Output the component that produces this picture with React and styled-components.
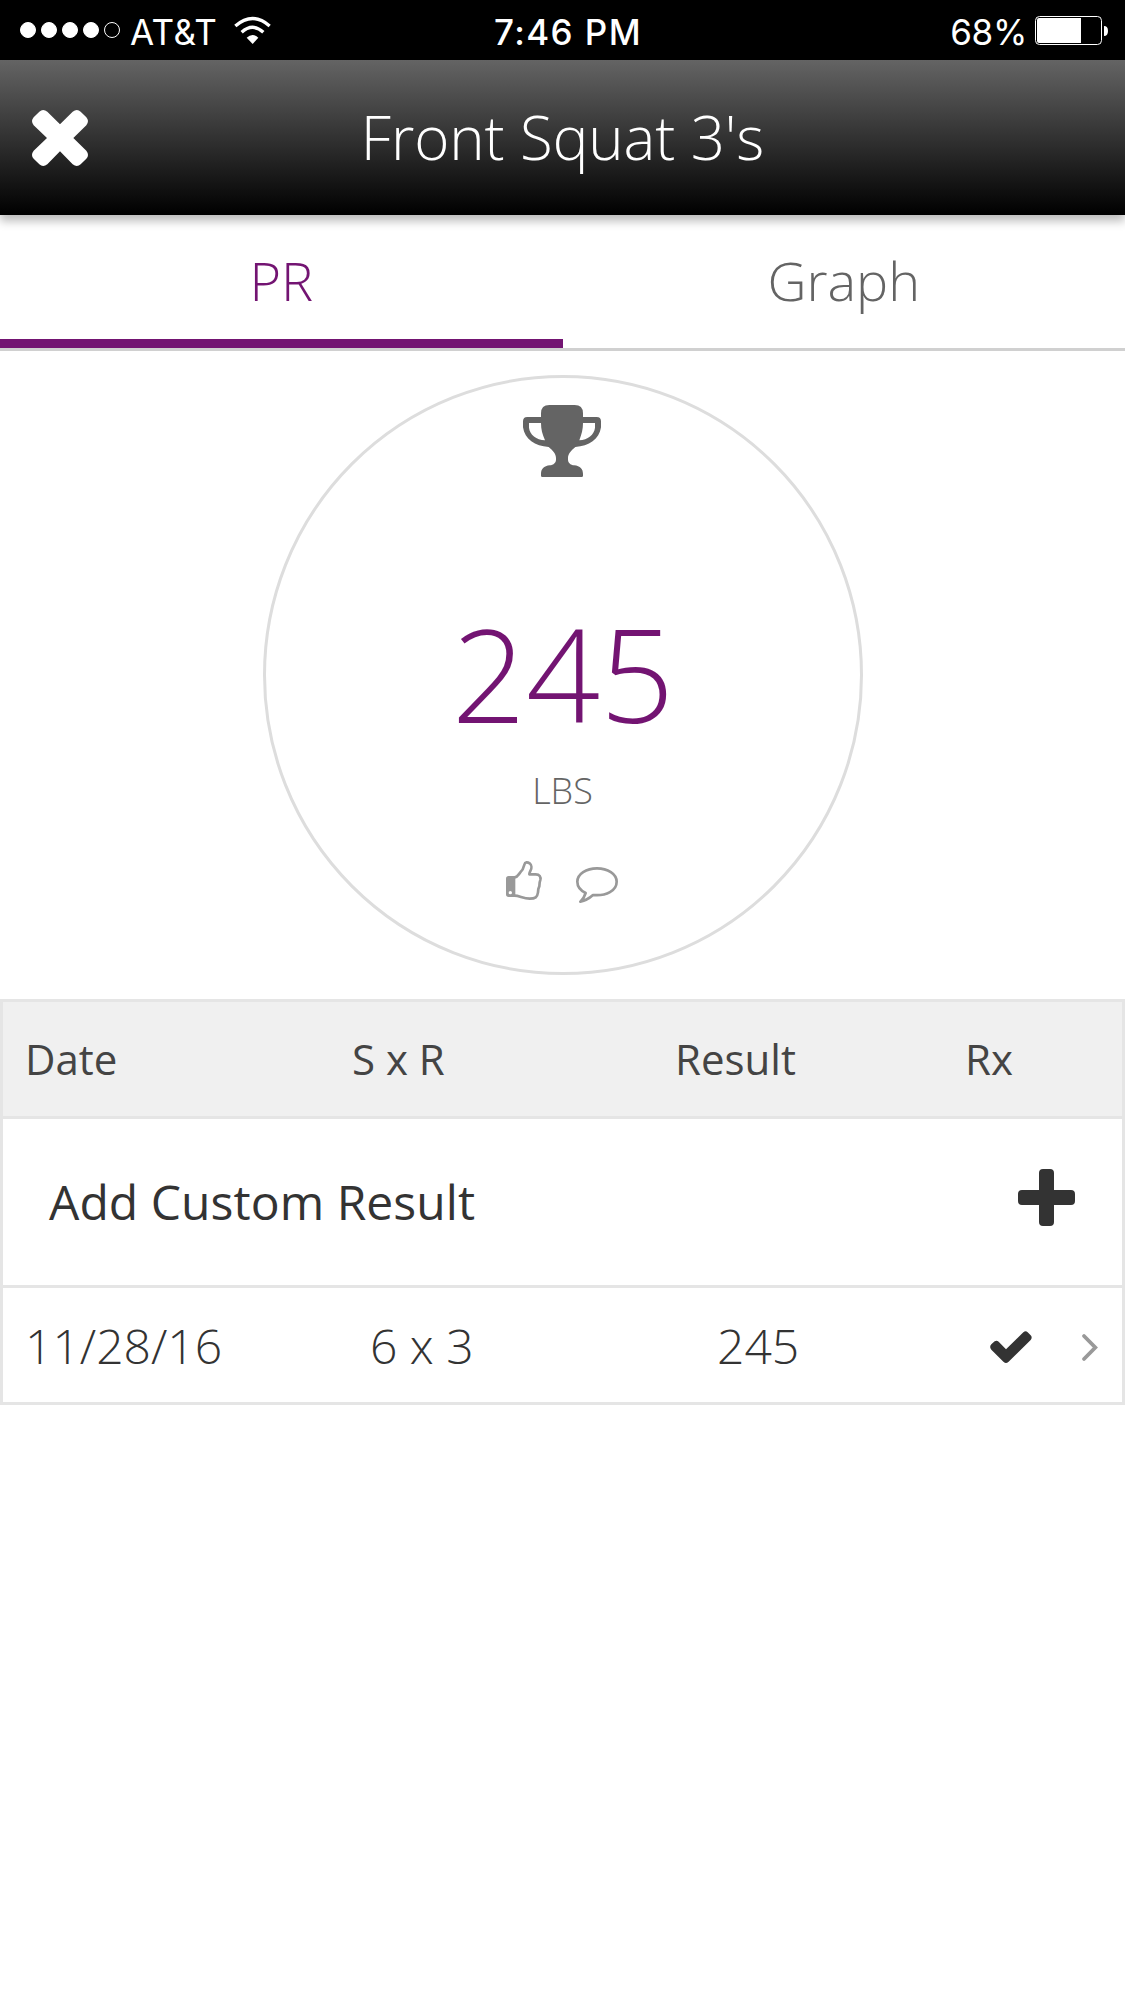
import React from "react";
import styled, { createGlobalStyle } from "styled-components";

const Global = createGlobalStyle`
  * { box-sizing: border-box; }
  body { margin: 0; background: #fff; }
`;

const Screen = styled.main`
  width: 1125px;
  height: 2001px;
  overflow: hidden;
  background: #fff;
  color: #333;
  font-family: "Open Sans", sans-serif;
`;

const StatusBar = styled.div`
  display: grid;
  grid-template-columns: 1fr auto 1fr;
  align-items: center;
  height: 60px;
  padding: 0 17px 0 20px;
  background: #000;
  color: #fff;
  font-family: Inter, sans-serif;
  font-size: 35px;
  line-height: 56px;
`;
const StatusGroup = styled.div`
  display: flex;
  align-items: center;
  justify-content: ${(p) => (p.$end ? "flex-end" : "flex-start")};
`;
const Clock = styled.span`
  padding: 3px 0 0 8px;
  font-weight: 500;
  letter-spacing: 1.4px;
`;
const Carrier = styled.span`
  margin: 0 17px 0 10px;
  padding-top: 3px;
  letter-spacing: 0.4px;
`;
const Charge = styled.span`
  margin-right: 8px;
  padding-top: 3px;
  letter-spacing: -0.3px;
`;
const Dots = styled.div`
  display: flex;
  gap: 5px;
`;
const Dot = styled.i`
  width: 16px;
  height: 16px;
  border: 1px solid #fff;
  border-radius: 50%;
  background: ${(p) => (p.$on ? "#fff" : "transparent")};
`;
const Icon = styled.svg`
  display: block;
  flex: none;
  overflow: visible;
`;

const Header = styled.header`
  position: relative;
  display: grid;
  grid-template-columns: 120px 1fr 120px;
  align-items: center;
  height: 155px;
  padding-left: 32px;
  padding-right: 32px;
  background: linear-gradient(#646464, #000);
  box-shadow: 0 6px 9px rgba(0, 0, 0, 0.27);
  color: #fff;
`;
const Title = styled.h1`
  margin: 0;
  font-size: 60px;
  font-weight: 300;
  letter-spacing: -0.1px;
  line-height: 155px;
  text-align: center;
`;

const Tabs = styled.nav`
  display: flex;
  height: 136px;
  border-bottom: 3px solid #d0d0d0;
`;
const Tab = styled.div`
  flex: 1;
  border-bottom: 9px solid ${(p) => (p.$active ? "#731472" : "transparent")};
  color: ${(p) => (p.$active ? "#731472" : "#646464")};
  font-size: 54px;
  font-weight: 300;
  line-height: 130px;
  text-align: center;
`;

const Record = styled.section`
  display: flex;
  flex-direction: column;
  align-items: center;
  width: 600px;
  height: 600px;
  margin: 24px auto;
  padding: 27px 1px 0 0;
  border: 3px solid #ddd;
  border-radius: 50%;
`;
const Score = styled.div`
  margin-top: 107px;
  padding-left: 2px;
  color: #731472;
  font-size: 130px;
  font-weight: 300;
  line-height: 177px;
`;
const Unit = styled.div`
  margin-top: 5px;
  padding-left: 1px;
  color: #646464;
  font-size: 36px;
  font-weight: 300;
  line-height: 49px;
`;
const Social = styled.div`
  display: flex;
  align-items: flex-end;
  gap: 34px;
  margin-top: 46px;
`;
const ThumbSlot = styled.span`
  padding-bottom: 3px;
`;

const Table = styled.section`
  border: 3px solid #e5e5e5;
`;
const Row = styled.div`
  display: grid;
  grid-template-columns: 327px 323px 290px 1fr;
  align-items: center;
  height: ${(p) => p.$height}px;
  padding-left: 22px;
  padding-bottom: ${(p) => (p.$head ? 2 : 0)}px;
  border-bottom: ${(p) => (p.$last ? 0 : "3px solid #e5e5e5")};
  background: ${(p) => (p.$head ? "#f0f0f0" : "#fff")};
  color: ${(p) => (p.$head ? "#444" : "#333")};
  font-size: ${(p) => (p.$head ? 42 : 48)}px;
  font-weight: ${(p) => (p.$head ? 400 : 300)};
`;
const Cell = styled.div`
  padding-left: ${(p) => p.$indent || 0}px;
`;
const AddRow = styled.div`
  display: flex;
  align-items: center;
  justify-content: space-between;
  height: 169px;
  padding: 0 47px 2px 46px;
  border-bottom: 3px solid #e5e5e5;
  font-size: 48px;
  font-weight: 400;
  letter-spacing: 0.06px;
`;
const PlusSlot = styled.span`
  padding-bottom: 7px;
`;
const Marks = styled.div`
  display: flex;
  align-items: center;
  gap: 50px;
  padding: 4px 0 0 25px;
`;

const Wifi = () => (
  <Icon width="37" height="27" viewBox="0 0 111 81">
    <g fill="none" stroke="#fff" strokeWidth="10">
      <path d="M4 27Q56-18 107 27" />
      <path d="M23 46Q56 16 88 46" />
    </g>
    <path d="M38 62Q56 46 73 62L56 81Z" fill="#fff" />
  </Icon>
);

const Battery = () => (
  <Icon width="73" height="29" viewBox="0 0 73 29">
    <rect x=".5" y=".5" width="66" height="28" rx="4" fill="none" stroke="#fff" />
    <path d="M46 2H4Q2 2 2 4V25Q2 27 4 27H46Z" fill="#fff" />
    <path d="M69 10Q73 10 73 15T69 20Z" fill="#fff" />
  </Icon>
);

const Close = () => (
  <Icon width="56" height="56" viewBox="0 0 168 168">
    <path
      fill="#fff"
      d="M84 43L122 5Q135-5 146 5L163 22Q173 33 163 46L124 84L163 122Q173 135 163 146L146 163Q135 173 122 163L84 124L46 163Q33 173 22 163L5 146Q-5 135 5 122L45 84L5 46Q-5 33 5 22L22 5Q33-5 46 5Z"
    />
  </Icon>
);

const Trophy = () => (
  <Icon width="78" height="72" viewBox="249 105 234 216">
    <path
      fill="#646464"
      fillRule="evenodd"
      d="M303 130Q303 105 328 105H404Q429 105 429 130V141H470Q483 141 483 154V172C478 208 447 229 406 231C392 243 384 252 384 264V270C385 280 393 285 402 286C421 288 429 297 429 312V317Q429 321 425 321H307Q303 321 303 317V312C303 297 311 288 330 286C339 285 347 280 348 270V264C348 252 340 243 326 231C285 229 254 208 249 172V154Q249 141 262 141H303ZM303 159H267V173C269 194 289 209 315 211C307 192 303 178 303 159ZM429 159C429 178 425 192 418 211C443 209 463 194 465 173V159Z"
    />
  </Icon>
);

const Thumb = () => (
  <Icon width="36" height="39" viewBox="198 783 108 117">
    <path
      fill="#999"
      fillRule="evenodd"
      d="M206 828H226V891H206Q198 891 198 883V836Q198 828 206 828ZM211 873A5 5 0 1 0 211 883A5 5 0 1 0 211 873Z"
    />
    <path
      fill="none"
      stroke="#999"
      strokeWidth="8"
      strokeLinejoin="round"
      d="M224 832C233 831 235 824 241 817C250 809 251 803 253 794C255 785 263 786 269 790C275 795 276 805 271 813C269 818 268 820 268 823H287C299 823 303 831 301 840L299 847L298 859L295 867L294 877C292 892 286 896 269 896C250 896 238 887 224 887"
    />
  </Icon>
);

const Comment = () => (
  <Icon width="42" height="36" viewBox="408 801 126 108">
    <path
      fill="none"
      stroke="#999"
      strokeWidth="8"
      strokeLinejoin="round"
      d="M471 805C503 805 530 822 530 845C530 871 500 889 459 885C448 895 436 902 421 905C429 898 434 889 437 879C421 871 412 859 412 845C412 822 439 805 471 805Z"
    />
  </Icon>
);

const Plus = () => (
  <Icon width="57" height="57" viewBox="0 0 57 57">
    <path
      fill="#333"
      d="M25 0H32Q36 0 36 4V21H53Q57 21 57 25V32Q57 36 53 36H36V53Q36 57 32 57H25Q21 57 21 53V36H4Q0 36 0 32V25Q0 21 4 21H21V4Q21 0 25 0Z"
    />
  </Icon>
);

const Check = () => (
  <Icon width="42" height="32" viewBox="0 0 126 96">
    <path
      fill="#333"
      d="M4 40L14 31Q20 27 26 32L48 55L100 4Q107 -2 113 4L122 13Q128 19 122 27L55 93Q48 99 41 93L4 56Q-3 48 4 40Z"
    />
  </Icon>
);

const Chevron = () => (
  <Icon width="16" height="27" viewBox="0 0 16 27">
    <path
      d="M2 2L13.300 13.500L2 25"
      fill="none"
      stroke="#999"
      strokeWidth="3.800"
      strokeLinecap="round"
    />
  </Icon>
);

export default function App() {
  return (
    <Screen>
      <Global />
      <StatusBar>
        <StatusGroup>
          <Dots>
            {[1, 1, 1, 1, 0].map((on, i) => (
              <Dot key={i} $on={on} />
            ))}
          </Dots>
          <Carrier>AT&amp;T</Carrier>
          <Wifi />
        </StatusGroup>
        <Clock>7:46 PM</Clock>
        <StatusGroup $end>
          <Charge>68%</Charge>
          <Battery />
        </StatusGroup>
      </StatusBar>
      <Header>
        <Close />
        <Title>Front Squat 3's</Title>
      </Header>
      <Tabs>
        <Tab $active>PR</Tab>
        <Tab>Graph</Tab>
      </Tabs>
      <Record>
        <Trophy />
        <Score>245</Score>
        <Unit>LBS</Unit>
        <Social>
          <ThumbSlot>
            <Thumb />
          </ThumbSlot>
          <Comment />
        </Social>
      </Record>
      <Table>
        <Row $head $height={117}>
          <Cell>Date</Cell>
          <Cell>S x R</Cell>
          <Cell>Result</Cell>
          <Cell>Rx</Cell>
        </Row>
        <AddRow>
          <span>Add Custom Result</span>
          <PlusSlot>
            <Plus />
          </PlusSlot>
        </AddRow>
        <Row $height={114} $last>
          <Cell>11/28/16</Cell>
          <Cell $indent={18}>6 x 3</Cell>
          <Cell $indent={42}>245</Cell>
          <Marks>
            <Check />
            <Chevron />
          </Marks>
        </Row>
      </Table>
    </Screen>
  );
}
